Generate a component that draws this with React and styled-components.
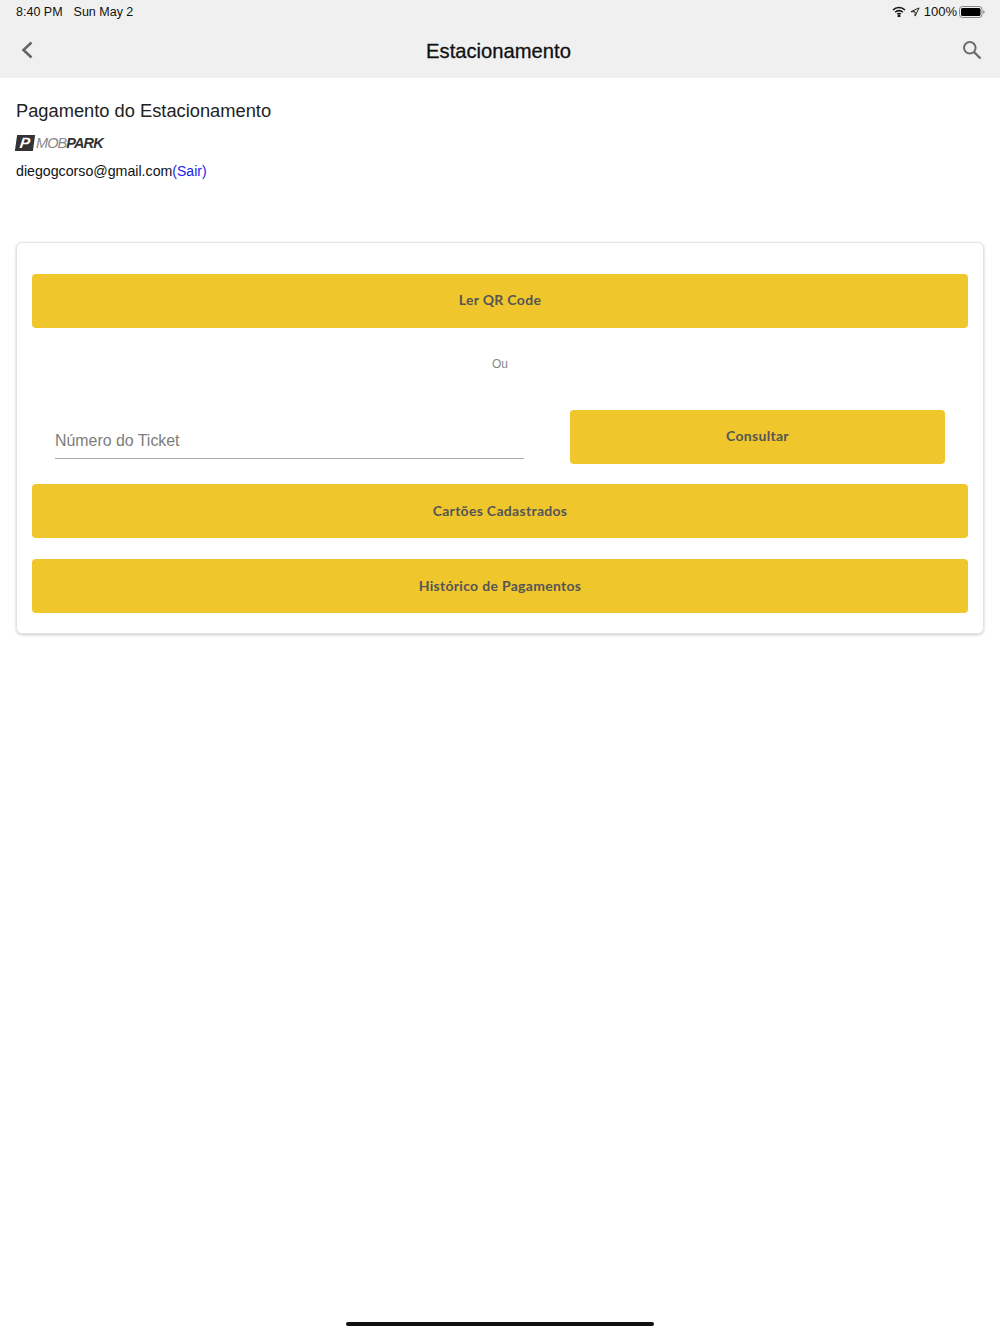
import React from "react";
import styled, { createGlobalStyle } from "styled-components";

const Global = createGlobalStyle`
  html, body { margin: 0; padding: 0; background: #fff; }
  body { font-family: "Liberation Sans", Arial, sans-serif; }
`;

const Page = styled.div`
  width: 1000px;
  height: 1334px;
  display: flex;
  flex-direction: column;
  background: #fff;
  overflow: hidden;
`;

const Header = styled.header`
  height: 78px;
  background: #f0f0f0;
  display: flex;
  flex-direction: column;
  flex-shrink: 0;
`;

const StatusBar = styled.div`
  height: 23px;
  padding: 0 15px 0 16px;
  display: flex;
  align-items: center;
  justify-content: space-between;
  font-size: 12.5px;
  color: #111;
`;

const StatusLeft = styled.div`
  display: flex;
  gap: 11px;
`;

const StatusRight = styled.div`
  display: flex;
  align-items: center;
`;

const WifiSlot = styled.span`
  display: flex;
  margin-right: 4px;
`;

const ArrowSlot = styled.span`
  display: flex;
  margin-right: 4px;
`;

const BatteryLevel = styled.span`
  font-size: 13px;
  margin-right: 2px;
`;

const NavBar = styled.div`
  flex: 1;
  display: flex;
  align-items: center;
  justify-content: space-between;
  padding: 0 18px 1px 20px;
`;

const NavTitle = styled.h1`
  margin: 2px 0 0 1px;
  font-size: 20.2px;
  font-weight: 400;
  color: #111;
  -webkit-text-stroke: 0.3px #111;
`;

const Intro = styled.section`
  padding: 22px 16px 0;
  height: 164px;
  box-sizing: border-box;
  flex-shrink: 0;
`;

const Heading = styled.h2`
  margin: 0;
  font-size: 18.3px;
  line-height: 22px;
  font-weight: 400;
  color: #222;
`;

const Logo = styled.div`
  margin-top: 12px;
  height: 18px;
  display: flex;
  align-items: center;
  gap: 2px;
`;

const LogoBadge = styled.span`
  width: 18px;
  height: 16px;
  background: #333;
  color: #fff;
  font: italic 700 15px/16px "Liberation Sans", sans-serif;
  text-align: center;
  transform: skewX(-8deg);
`;

const LogoText = styled.span`
  font: italic 400 14.5px/16px "Liberation Sans", sans-serif;
  letter-spacing: -0.9px;
  color: #888;
`;

const LogoStrong = styled.b`
  color: #333;
  font-weight: 700;
`;

const Account = styled.div`
  margin-top: 10px;
  font-size: 14.2px;
  line-height: 19px;
  color: #111;
`;

const SignOut = styled.span`
  color: #1a1aee;
  font-size: 14px;
`;

const Card = styled.section`
  margin: 0 16px;
  padding: 31px 15px 20px;
  border: 1px solid #e4e4e4;
  border-radius: 6px;
  box-shadow: 0 1px 3px rgba(0, 0, 0, 0.2);
  display: flex;
  flex-direction: column;
  background: #fff;
`;

const ActionButton = styled.button`
  height: 54px;
  width: 100%;
  border: 0;
  padding: 0 0 ${(p) => (p.$low ? 1 : 3)}px;
  border-radius: 4px;
  background: #f0c62d;
  color: #555555;
  font: 700 14px "Lato", sans-serif;
  letter-spacing: 0.3px;
  flex-shrink: 0;
`;

const Divider = styled.div`
  height: 82px;
  padding-top: 27px;
  box-sizing: border-box;
  text-align: center;
  font-size: 12px;
  line-height: 18px;
  color: #888;
`;

const TicketRow = styled.div`
  display: flex;
  align-items: flex-start;
  padding: 0 23px;
  gap: 46px;
  margin-bottom: 20px;
`;

const TicketField = styled.div`
  width: 469px;
  height: 49px;
  box-sizing: border-box;
  border-bottom: 1px solid #aaa;
  padding-top: 20px;
  font-size: 15.9px;
  line-height: 22px;
  color: #7d7d7d;
  flex-shrink: 0;
`;

const RowButton = styled(ActionButton)`
  flex: 1;
  width: auto;
  min-width: 0;
`;

const SpacedButton = styled(ActionButton)`
  margin-bottom: 21px;
`;

const HomeBar = styled.div`
  position: absolute;
  left: 346px;
  top: 1322px;
  width: 308px;
  height: 4px;
  border-radius: 2px;
  background: #111;
`;

const Wifi = () => (
  <svg width="14" height="11" viewBox="0 0 14 11" fill="none" stroke="#111" strokeWidth="1.6">
    <path d="M1 4a8.5 8.5 0 0 1 12 0" />
    <path d="M3.2 6.2a5.4 5.4 0 0 1 7.6 0" />
    <path d="M5.3 8.2a2.4 2.4 0 0 1 3.4 0" />
    <circle cx="7" cy="10" r="0.7" fill="#111" />
  </svg>
);

const Arrow = () => (
  <svg width="10" height="10" viewBox="0 0 11 11" fill="none" stroke="#222" strokeWidth="1.1" strokeLinejoin="round">
    <path d="M10 1 1 5.2h4.6V10L10 1Z" />
  </svg>
);

const Battery = () => (
  <svg width="26" height="12" viewBox="0 0 26 12">
    <rect x="0.5" y="0.5" width="22.5" height="11" rx="3" fill="none" stroke="#888" />
    <rect x="2" y="2" width="19.5" height="8" rx="1.5" fill="#000" />
    <path d="M24.2 4.2c.9.2 1.4.9 1.4 1.8s-.5 1.6-1.4 1.8Z" fill="#888" />
  </svg>
);

const BackIcon = () => (
  <svg width="14" height="20" viewBox="0 0 14 20" fill="none" stroke="#666" strokeWidth="2.6">
    <path d="M11.5 2.5 3.5 10l8 7.5" />
  </svg>
);

const SearchIcon = () => (
  <svg width="20" height="20" viewBox="0 0 20 20" fill="none" stroke="#6b6b6b" strokeWidth="2">
    <circle cx="7.8" cy="7.8" r="5.8" />
    <path d="m12 12 6.5 6.5" strokeWidth="2.4" />
  </svg>
);

export default function App() {
  return (
    <Page>
      <Global />
      <Header>
        <StatusBar>
          <StatusLeft>
            <span>8:40 PM</span>
            <span>Sun May 2</span>
          </StatusLeft>
          <StatusRight>
            <WifiSlot><Wifi /></WifiSlot>
            <ArrowSlot><Arrow /></ArrowSlot>
            <BatteryLevel>100%</BatteryLevel>
            <Battery />
          </StatusRight>
        </StatusBar>
        <NavBar>
          <BackIcon />
          <NavTitle>Estacionamento</NavTitle>
          <SearchIcon />
        </NavBar>
      </Header>
      <Intro>
        <Heading>Pagamento do Estacionamento</Heading>
        <Logo>
          <LogoBadge>P</LogoBadge>
          <LogoText>
            MOB<LogoStrong>PARK</LogoStrong>
          </LogoText>
        </Logo>
        <Account>
          diegogcorso@gmail.com<SignOut>(Sair)</SignOut>
        </Account>
      </Intro>
      <Card>
        <ActionButton>Ler QR Code</ActionButton>
        <Divider>Ou</Divider>
        <TicketRow>
          <TicketField>Número do Ticket</TicketField>
          <RowButton>Consultar</RowButton>
        </TicketRow>
        <SpacedButton $low>Cartões Cadastrados</SpacedButton>
        <ActionButton $low>Histórico de Pagamentos</ActionButton>
      </Card>
      <HomeBar />
    </Page>
  );
}
